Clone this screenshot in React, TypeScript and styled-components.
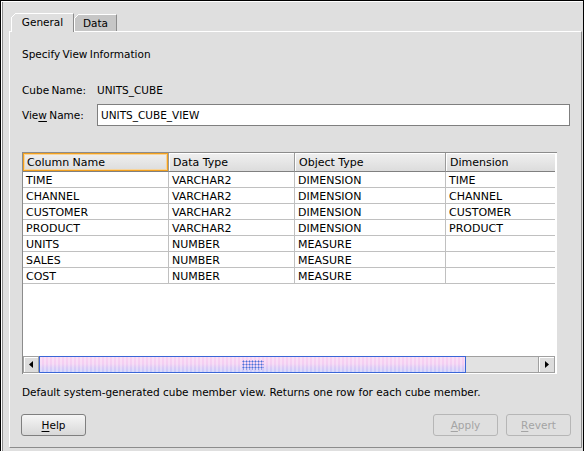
import React from 'react';
import styled, { createGlobalStyle } from 'styled-components';

const BG = '#dfdfdf';
const FONT = `"DejaVu Sans", "Noto Sans", sans-serif`;

const Global = createGlobalStyle`
  html, body { margin: 0; padding: 0; background: ${BG}; }
  body { font-family: ${FONT}; font-size: 10.5px; color: #000; }
  * { box-sizing: border-box; }
`;

const Frame = styled.div`
  width: 584px;
  height: 451px;
  background: ${BG};
  border-top: 1px solid #000;
  border-left: 1px solid #000;
  border-right: 1px solid #000;
  box-shadow: inset 1px 1px 0 #fff, inset 2px 0 0 #8c8c8c;
  padding: 12px 1px 3px 8px;
  display: flex;
  flex-direction: column;
`;

const TabStrip = styled.div`
  display: flex;
  align-items: flex-end;
  height: 18px;
  margin-left: 2px;
  position: relative;
  z-index: 1;
`;

const Tab = styled.div<{ $active?: boolean; $w: number }>`
  position: relative;
  width: ${(p) => p.$w}px;
  height: ${(p) => (p.$active ? 19 : 17)}px;
  margin-bottom: ${(p) => (p.$active ? -1 : 0)}px;
  background: ${(p) => (p.$active ? BG : '#c6c6c6')};
  border-top: 1px solid #fff;
  border-left: 1px solid #fff;
  border-right: 1px solid #8c8c8c;
  display: flex;
  align-items: center;
  justify-content: center;
  padding-bottom: ${(p) => (p.$active ? 1 : 0)}px;
  line-height: 13px;
  &::before {
    content: '';
    position: absolute;
    top: -1px;
    left: -1px;
    width: 5px;
    height: 5px;
    background: linear-gradient(
      135deg,
      ${BG} 0 calc(50% - 0.7px),
      #fff calc(50% - 0.7px) calc(50% + 0.7px),
      transparent calc(50% + 0.7px)
    );
  }
`;

const Panel = styled.div`
  flex: 1;
  border-top: 1px solid #fff;
  border-left: 1px solid #fff;
  border-right: 1px solid #8c8c8c;
  border-bottom: 1px solid #8c8c8c;
  padding: 16px 11px 0 12px;
  display: flex;
  flex-direction: column;
`;

const Heading = styled.div`
  height: 13px;
  line-height: 13px;
  word-spacing: -1px;
  white-space: nowrap;
`;

const FormRow = styled.div<{ $h: number; $mt: number }>`
  display: flex;
  align-items: center;
  height: ${(p) => p.$h}px;
  margin-top: ${(p) => p.$mt}px;
  white-space: nowrap;
`;

const Label = styled.div`
  width: 75px;
  flex: none;
  word-spacing: -1px;
  line-height: 14px;
`;

const Value = styled.div`
  line-height: 14px;
`;

const Mn = styled.span`
  text-decoration: underline;
  text-underline-offset: 2px;
`;

const TextField = styled.div`
  flex: 1;
  height: 22px;
  background: #fff;
  border: 1px solid #7f7f7f;
  padding-left: 3px;
  display: flex;
  align-items: center;
  line-height: 14px;
`;

const ScrollPane = styled.div`
  margin-top: 26px;
  width: 535px;
  height: 222px;
  background: #fff;
  border-left: 1px solid #8c8c8c;
  border-top: 1px solid #8c8c8c;
  padding: 0 2px 1px 0;
  display: flex;
  flex-direction: column;
`;

const Viewport = styled.div`
  flex: 1;
  overflow: hidden;
  font-size: 11px;
`;

const TableGrid = styled.div`
  display: grid;
  grid-template-columns: 146px 126px 151px 200px;
  width: 623px;
`;

const HeadCell = styled.div<{ $focus?: boolean }>`
  height: 19px;
  padding: 1px 0 0 4px;
  line-height: 17px;
  background: linear-gradient(#f0f0f0, #dcdcdc);
  border-right: 1px solid #9a9a9a;
  border-bottom: 1px solid #808080;
  box-shadow: ${(p) =>
    p.$focus
      ? 'inset 0 0 0 1px #f0a020, inset 0 0 0 2px #f8d49a'
      : 'inset 1px 1px 0 #fff'};
  white-space: nowrap;
  overflow: hidden;
`;

const Cell = styled.div`
  height: 16px;
  padding: 2px 0 0 3px;
  line-height: 13px;
  border-right: 1px solid #c0c0c0;
  border-bottom: 1px solid #c0c0c0;
  white-space: nowrap;
  overflow: hidden;
`;

const HScroll = styled.div`
  height: 17px;
  width: 532px;
  display: flex;
  flex: none;
`;

const ArrowBtn = styled.div<{ $w: number }>`
  width: ${(p) => p.$w}px;
  flex: none;
  background: #dcdcdc;
  border: 1px solid #a0a0a0;
  box-shadow: inset 1px 1px 0 #fff;
  display: flex;
  align-items: center;
  justify-content: center;
`;

const Thumb = styled.div`
  width: 427px;
  flex: none;
  border: 1px solid #3a66d6;
  background:
    repeating-linear-gradient(90deg, rgba(255, 255, 255, 0.3) 0 2px, transparent 2px 4px),
    linear-gradient(#fad2f2 0%, #f4cef2 45%, #dccaf6 70%, #c8cafa 100%);
  display: flex;
  align-items: center;
  justify-content: center;
`;

const Grip = styled.div`
  width: 22px;
  height: 10px;
  background-image: radial-gradient(circle, #4a70d8 0.9px, transparent 1.1px);
  background-size: 3px 3px;
`;

const Track = styled.div`
  flex: 1;
  background: #e2e2e2;
  border-top: 1px solid #a0a0a0;
  border-bottom: 1px solid #a0a0a0;
`;

const Description = styled.div`
  margin-top: 11px;
  height: 14px;
  line-height: 14px;
  white-space: nowrap;
`;

const ButtonRow = styled.div`
  margin: 15px -1px 0 -1px;
  display: flex;
  gap: 8px;
`;

const Spacer = styled.div`
  flex: 1;
`;

const Button = styled.div<{ $disabled?: boolean }>`
  width: 65px;
  height: 22px;
  border-radius: 3px;
  border: 1px solid ${(p) => (p.$disabled ? '#b6b6b6' : '#7f7f7f')};
  background: ${(p) => (p.$disabled ? BG : 'linear-gradient(#f6f6f6, #d8d8d8)')};
  color: ${(p) => (p.$disabled ? '#a4a4a4' : '#000')};
  display: flex;
  align-items: center;
  justify-content: center;
  line-height: 14px;
`;

const rows: string[][] = [
  ['TIME', 'VARCHAR2', 'DIMENSION', 'TIME'],
  ['CHANNEL', 'VARCHAR2', 'DIMENSION', 'CHANNEL'],
  ['CUSTOMER', 'VARCHAR2', 'DIMENSION', 'CUSTOMER'],
  ['PRODUCT', 'VARCHAR2', 'DIMENSION', 'PRODUCT'],
  ['UNITS', 'NUMBER', 'MEASURE', ''],
  ['SALES', 'NUMBER', 'MEASURE', ''],
  ['COST', 'NUMBER', 'MEASURE', ''],
];

const headers = ['Column Name', 'Data Type', 'Object Type', 'Dimension'];

const Arrow = ({ dir }: { dir: 'left' | 'right' }) => (
  <svg width="4" height="7" viewBox="0 0 4 7">
    {dir === 'left' ? (
      <polygon points="4,0 0,3.5 4,7" fill="#000" />
    ) : (
      <polygon points="0,0 4,3.5 0,7" fill="#000" />
    )}
  </svg>
);

export default function App() {
  return (
    <>
      <Global />
      <Frame>
        <TabStrip>
          <Tab $active $w={63}>General</Tab>
          <Tab $w={43}>Data</Tab>
        </TabStrip>
        <Panel>
          <Heading>Specify View Information</Heading>
          <FormRow $h={16} $mt={21}>
            <Label>Cube Name:</Label>
            <Value>UNITS_CUBE</Value>
          </FormRow>
          <FormRow $h={22} $mt={6}>
            <Label>
              Vie<Mn>w</Mn> Name:
            </Label>
            <TextField>UNITS_CUBE_VIEW</TextField>
          </FormRow>
          <ScrollPane>
            <Viewport>
              <TableGrid>
                {headers.map((h, i) => (
                  <HeadCell key={h} $focus={i === 0}>
                    {h}
                  </HeadCell>
                ))}
                {rows.map((r, ri) =>
                  r.map((c, ci) => <Cell key={`${ri}-${ci}`}>{c}</Cell>)
                )}
              </TableGrid>
            </Viewport>
            <HScroll>
              <ArrowBtn $w={16}>
                <Arrow dir="left" />
              </ArrowBtn>
              <Thumb>
                <Grip />
              </Thumb>
              <Track />
              <ArrowBtn $w={17}>
                <Arrow dir="right" />
              </ArrowBtn>
            </HScroll>
          </ScrollPane>
          <Description>
            Default system-generated cube member view. Returns one row for each cube member.
          </Description>
          <ButtonRow>
            <Button>
              <Mn>H</Mn>elp
            </Button>
            <Spacer />
            <Button $disabled>
              <Mn>A</Mn>pply
            </Button>
            <Button $disabled>
              <Mn>R</Mn>evert
            </Button>
          </ButtonRow>
        </Panel>
      </Frame>
    </>
  );
}
